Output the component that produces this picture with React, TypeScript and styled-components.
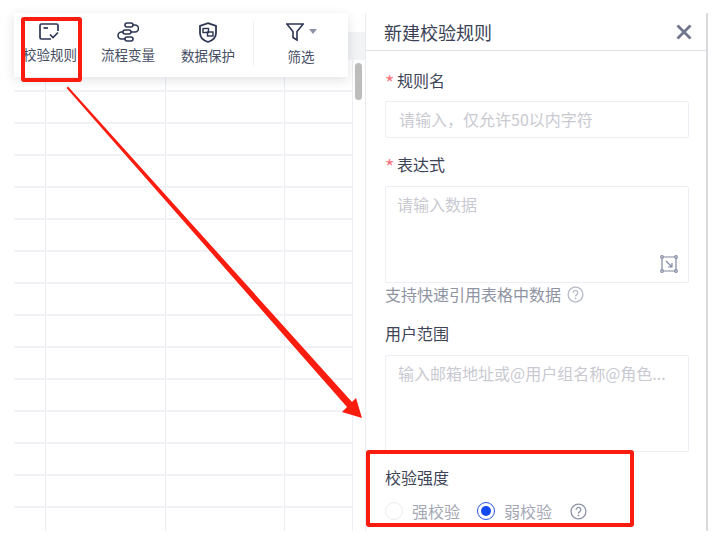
import React from 'react';
import styled, { createGlobalStyle } from 'styled-components';

const GlobalStyle = createGlobalStyle`
  html, body { margin: 0; padding: 0; background: #fff; }
  body { font-family: "Noto Sans CJK SC", "Liberation Sans", sans-serif; }
`;

const Page = styled.div`
  position: relative;
  width: 716px;
  height: 549px;
  overflow: hidden;
  background: #fff;
  padding: 13px 8px 18px 14px;
  box-sizing: border-box;
`;

const Frame = styled.div`
  display: flex;
  height: 100%;
`;

const Sheet = styled.div`
  position: relative;
  width: 339px;
  flex: none;
  display: flex;
  flex-direction: column;
`;

const SheetHeader = styled.div`
  height: 19px;
  flex: none;
`;

const ColumnHead = styled.div`
  height: 28px;
  flex: none;
  background: #f2f3f5;
`;

const Cells = styled.div`
  flex: 1;
  border-right: 1px solid #eeeef4;
  box-sizing: border-box;
  background-color: #fff;
  background-image:
    repeating-linear-gradient(to bottom, transparent 0, transparent 30px, #f1f1f6 30px, #f1f1f6 32px),
    linear-gradient(to right, transparent 31px, #ecedf3 31px, #ecedf3 32px, transparent 32px),
    linear-gradient(to right, transparent 151px, #ecedf3 151px, #ecedf3 152px, transparent 152px),
    linear-gradient(to right, transparent 270px, #ecedf3 270px, #ecedf3 271px, transparent 271px);
`;

const Rail = styled.div`
  width: 13px;
  flex: none;
  display: flex;
  flex-direction: column;
  border-right: 1px solid #eaebf1;
  box-sizing: border-box;
`;

const RailHead = styled.div`
  height: 47px;
  flex: none;
  background: linear-gradient(to bottom, #fff 19px, #f2f3f5 19px);
`;

const ScrollThumb = styled.div`
  width: 7px;
  height: 37px;
  margin: 3px 0 0 2px;
  border-radius: 4px;
  background: #bdbdbd;
`;

const Toolbar = styled.div`
  position: absolute;
  top: 0;
  left: 0;
  width: 334px;
  height: 64px;
  display: flex;
  background: #fff;
  box-shadow: 0 3px 10px rgba(40, 50, 80, 0.14);
`;

const ToolGroup = styled.div`
  display: flex;
  align-items: flex-start;
  width: 240px;
  flex: none;
  box-sizing: border-box;
  border-right: 1px solid #f0f1f4;
  margin: 8px 0 11px;
  padding-top: 1px;
`;

const Tool = styled.div<{ $width: number }>`
  width: ${({ $width }) => $width}px;
  flex: none;
  display: flex;
  flex-direction: column;
  align-items: center;
  color: #464e63;
  font-size: 13.5px;
  line-height: 20px;
  white-space: nowrap;
  svg { display: block; margin-bottom: 2px; }
`;

const FilterTool = styled(Tool)`
  margin: 9px 0 0 8px;
  svg { margin-bottom: 4px; }
`;

const FilterIcons = styled.div`
  display: flex;
  align-items: center;
  gap: 5px;
`;

const Caret = styled.span`
  width: 0;
  height: 0;
  margin-bottom: 5px;
  border-left: 4px solid transparent;
  border-right: 4px solid transparent;
  border-top: 5px solid #8d92a6;
`;

const Panel = styled.div`
  flex: 1;
  display: flex;
  flex-direction: column;
  overflow: hidden;
  border-right: 2px solid #d9d9de;
  box-sizing: border-box;
  background: #fff;
`;

const PanelHeader = styled.div`
  height: 38px;
  flex: none;
  box-sizing: border-box;
  display: flex;
  align-items: center;
  justify-content: space-between;
  padding: 0 14px 0 18px;
  border-bottom: 1px solid #e0e1e6;
`;

const PanelTitle = styled.div`
  font-size: 18px;
  line-height: 30px;
  color: #3a4154;
`;

const Form = styled.div`
  padding: 17px 18px 0 19px;
  display: flex;
  flex-direction: column;
`;

const Label = styled.div<{ $top?: number; $bottom?: number }>`
  font-size: 16px;
  line-height: 24px;
  height: 24px;
  color: #3d4456;
  margin-top: ${({ $top }) => $top ?? 0}px;
  margin-bottom: ${({ $bottom }) => $bottom ?? 9}px;
`;

const Star = styled.span`
  display: inline-block;
  width: 12px;
  color: #f5767f;
  font-size: 20px;
  line-height: 16px;
  vertical-align: -4px;
`;

const Field = styled.div<{ $height: number; $inset: number }>`
  position: relative;
  width: 304px;
  height: ${({ $height }) => $height}px;
  box-sizing: border-box;
  border: 1px solid #edeef3;
  border-radius: 2px;
  padding: 5px ${({ $inset }) => $inset}px;
  font-size: 16px;
  line-height: 24px;
  color: #c9cad1;
  white-space: nowrap;
`;

const ExpandIcon = styled.div`
  position: absolute;
  right: 10px;
  bottom: 10px;
  width: 18px;
  height: 18px;
`;

const Help = styled.div`
  display: flex;
  align-items: center;
  gap: 6px;
  height: 22px;
  font-size: 16px;
  color: #8f94a3;
`;

const RadioRow = styled.div`
  display: flex;
  align-items: center;
  height: 24px;
  font-size: 16px;
  color: #a3a7b4;
`;

const Radio = styled.span<{ $checked?: boolean }>`
  width: 18px;
  height: 18px;
  box-sizing: border-box;
  flex: none;
  border-radius: 50%;
  border: 1px solid ${({ $checked }) => ($checked ? '#2a55e5' : '#ecedf1')};
  display: flex;
  align-items: center;
  justify-content: center;
  margin-right: 9px;
  &::after {
    content: '';
    display: ${({ $checked }) => ($checked ? 'block' : 'none')};
    width: 10px;
    height: 10px;
    border-radius: 50%;
    background: #1448f0;
  }
`;

const RadioText = styled.span<{ $gap: number }>`
  margin-right: ${({ $gap }) => $gap}px;
`;

const Callout = styled.div<{ $x: number; $y: number; $w: number; $h: number }>`
  position: absolute;
  left: ${({ $x }) => $x}px;
  top: ${({ $y }) => $y}px;
  width: ${({ $w }) => $w}px;
  height: ${({ $h }) => $h}px;
  box-sizing: border-box;
  border: 4px solid #fb1c10;
  border-radius: 3px;
`;

const ArrowSvg = styled.svg`
  position: absolute;
  left: 0;
  top: 0;
`;

const QuestionIcon: React.FC<{ color: string }> = ({ color }) => (
  <svg width="17" height="17" viewBox="0 0 17 17" fill="none">
    <circle cx="8.5" cy="8.5" r="7.4" stroke={color} strokeWidth="1.3" />
    <path d="M6.2 6.7a2.3 2.3 0 1 1 3.6 1.9c-.8.5-1.3.9-1.3 1.900" stroke={color} strokeWidth="1.3" />
    <circle cx="8.5" cy="12.4" r=".9" fill={color} />
  </svg>
);

const App: React.FC = () => (
  <Page>
    <GlobalStyle />
    <Frame>
      <Sheet>
        <SheetHeader />
        <ColumnHead />
        <Cells />
        <Toolbar>
          <ToolGroup>
            <Tool $width={72}>
              <svg width="24" height="20" viewBox="0 0 24 20" fill="none" stroke="#2c3654" strokeWidth="1.7">
                <path d="M20 9V3.500A1.500 1.500 0 0 0 18.500 2h-15A1.500 1.500 0 0 0 2 3.500v12A1.500 1.500 0 0 0 3.500 17H13" />
                <path d="M5.500 6h4.500" />
                <path d="M12 12.500l3 3 5-5" />
              </svg>
              校验规则
            </Tool>
            <Tool $width={84}>
              <svg width="22" height="20" viewBox="0 0 22 20" fill="none" stroke="#2c3654" strokeWidth="1.6">
                <rect x="8" y="1" width="8" height="4" rx="2" />
                <rect x="6" y="8" width="8" height="4" rx="2" />
                <rect x="8" y="15" width="8" height="4" rx="2" />
                <path d="M16 3h2a3.500 3.500 0 0 1 0 7h-4M6 10H4.500a3 3 0 0 0 0 7H8" />
              </svg>
              流程变量
            </Tool>
            <Tool $width={76}>
              <svg width="20" height="21" viewBox="0 0 20 21" fill="none" stroke="#2c3654" strokeWidth="1.8">
                <path d="M10 1.200l8 2.800v7c0 4.500-3.500 7.500-8 9-4.500-1.500-8-4.500-8-9V4z" />
                <rect x="5" y="6.500" width="5.500" height="4" strokeWidth="1.400" />
                <rect x="9.500" y="10" width="5.500" height="4" strokeWidth="1.400" />
              </svg>
              数据保护
            </Tool>
          </ToolGroup>
          <FilterTool $width={78}>
            <FilterIcons>
              <svg width="18" height="20" viewBox="0 0 18 20" fill="none" stroke="#2c3654" strokeWidth="1.600">
                <path d="M.800 2h16.400l-6.200 7.500V18l-4-2.500v-6z" />
              </svg>
              <Caret />
            </FilterIcons>
            筛选
          </FilterTool>
        </Toolbar>
      </Sheet>
      <Rail>
        <RailHead />
        <ScrollThumb />
      </Rail>
      <Panel>
        <PanelHeader>
          <PanelTitle>新建校验规则</PanelTitle>
          <svg width="16" height="16" viewBox="0 0 16 16" stroke="#6f768c" strokeWidth="2.800">
            <path d="M1.500 1.500l13 13M14.500 1.500l-13 13" />
          </svg>
        </PanelHeader>
        <Form>
          <Label><Star>*</Star>规则名</Label>
          <Field $height={37} $inset={13}>请输入，仅允许50以内字符</Field>
          <Label $top={14} $bottom={10}><Star>*</Star>表达式</Label>
          <Field $height={97} $inset={11}>
            请输入数据
            <ExpandIcon>
              <svg width="18" height="18" viewBox="0 0 18 18" fill="none" stroke="#8088a0" strokeWidth="1.200">
                <path d="M2 2h14v14H2z" />
                <circle cx="2" cy="2" r="1.300" fill="#fff" />
                <circle cx="16" cy="2" r="1.300" fill="#fff" />
                <circle cx="2" cy="16" r="1.300" fill="#fff" />
                <circle cx="16" cy="16" r="1.300" fill="#fff" />
                <path d="M6 6l6 6M12 8v4H8" />
              </svg>
            </ExpandIcon>
          </Field>
          <Help>支持快速引用表格中数据<QuestionIcon color="#b6bac7" /></Help>
          <Label $top={16} $bottom={10}>用户范围</Label>
          <Field $height={97} $inset={12}>输入邮箱地址或@用户组名称@角色...</Field>
          <Label $top={13} $bottom={10}>校验强度</Label>
          <RadioRow>
            <Radio />
            <RadioText $gap={17}>强校验</RadioText>
            <Radio $checked />
            <RadioText $gap={18}>弱校验</RadioText>
            <QuestionIcon color="#8f94a8" />
          </RadioRow>
        </Form>
      </Panel>
    </Frame>
    <Callout $x={21} $y={17} $w={61} $h={65} />
    <Callout $x={366} $y={450} $w={268} $h={77} />
    <ArrowSvg width="716" height="549" viewBox="0 0 716 549">
      <polygon points="66.500,88 68,86.500 352,402 356,398 362,418 342,412 347,407" fill="#fb1c10" />
    </ArrowSvg>
  </Page>
);

export default App;
